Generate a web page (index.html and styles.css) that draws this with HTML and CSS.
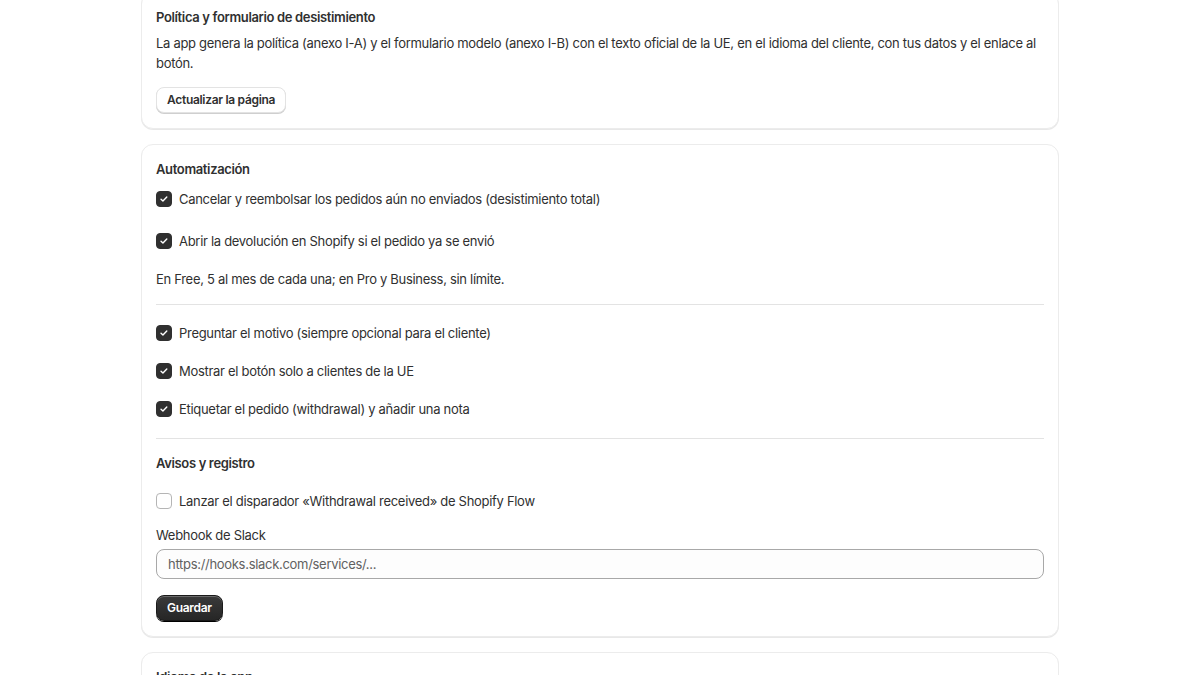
FILE: index.html
```html
<!DOCTYPE html>
<html lang="es">
<head>
<meta charset="utf-8">
<title>Ajustes</title>
<link rel="stylesheet" href="styles.css">
</head>
<body>
<main class="page">
  <section class="card">
    <h2 class="heading">Política y formulario de desistimiento</h2>
    <p class="text mt-6">La app genera la política (anexo I-A) y el formulario modelo (anexo I-B) con el texto oficial de la UE, en el idioma del cliente, con tus datos y el enlace al botón.</p>
    <div class="mt-14"><button class="btn">Actualizar la página</button></div>
  </section>

  <section class="card">
    <h2 class="heading">Automatización</h2>
    <label class="check mt-10"><span class="box on"><svg viewBox="0 0 16 16"><path d="M4.6 8.2l2.2 2.2 4.4-4.6" /></svg></span><span>Cancelar y reembolsar los pedidos aún no enviados (desistimiento total)</span></label>
    <label class="check mt-22"><span class="box on"><svg viewBox="0 0 16 16"><path d="M4.6 8.2l2.2 2.2 4.4-4.6" /></svg></span><span>Abrir la devolución en Shopify si el pedido ya se envió</span></label>
    <p class="text mt-18">En Free, 5 al mes de cada una; en Pro y Business, sin límite.</p>
    <hr class="divider">
    <label class="check"><span class="box on"><svg viewBox="0 0 16 16"><path d="M4.6 8.2l2.2 2.2 4.4-4.6" /></svg></span><span>Preguntar el motivo (siempre opcional para el cliente)</span></label>
    <label class="check mt-18"><span class="box on"><svg viewBox="0 0 16 16"><path d="M4.6 8.2l2.2 2.2 4.4-4.6" /></svg></span><span>Mostrar el botón solo a clientes de la UE</span></label>
    <label class="check mt-18"><span class="box on"><svg viewBox="0 0 16 16"><path d="M4.6 8.2l2.2 2.2 4.4-4.6" /></svg></span><span>Etiquetar el pedido (withdrawal) y añadir una nota</span></label>
    <hr class="divider divider-b">
    <h2 class="heading">Avisos y registro</h2>
    <label class="check mt-18"><span class="box"></span><span>Lanzar el disparador «Withdrawal received» de Shopify Flow</span></label>
    <label class="field-label mt-14" for="slack">Webhook de Slack</label>
    <input id="slack" class="input" type="text" placeholder="https://hooks.slack.com/services/...">
    <div class="mt-16"><button class="btn btn-primary">Guardar</button></div>
  </section>

  <section class="card">
    <h2 class="heading">Idioma de la app</h2>
    <p class="text mt-6">&nbsp;</p>
  </section>
</main>
</body>
</html>
```
FILE: styles.css
```css
* { box-sizing: border-box; }
html, body { margin: 0; padding: 0; background: #ffffff; }
body {
  font-family: Inter, "Noto Sans", "Liberation Sans", sans-serif;
  font-size: 13px;
  line-height: 20px;
  letter-spacing: -0.3px;
  color: #303030;
  overflow: hidden;
}
.page {
  width: 918px;
  margin: -8px auto 0;
  display: flex;
  flex-direction: column;
  gap: 15px;
}
.card {
  background: #fff;
  border: 1px solid #ececec;
  border-radius: 12px;
  box-shadow: 0 1px 0 0 rgba(0, 0, 0, 0.09);
  padding: 14px 14px 15px 14px;
  display: flex;
  flex-direction: column;
  align-items: stretch;
}
.heading {
  margin: 0;
  font-size: 13px;
  line-height: 20px;
  font-weight: 600;
  letter-spacing: -0.35px;
  color: #303030;
}
.text { margin: 0; }
.mt-6 { margin-top: 6px; }
.mt-10 { margin-top: 10px; }
.mt-14 { margin-top: 14px; }
.mt-16 { margin-top: 16px; }
.mt-18 { margin-top: 18px; }
.mt-22 { margin-top: 22px; }

.btn {
  font-family: inherit;
  font-size: 12px;
  font-weight: 600;
  line-height: 16px;
  letter-spacing: -0.3px;
  color: #303030;
  background: #fff;
  border: 1px solid #e3e3e3;
  border-radius: 8px;
  padding: 4px 10px;
  height: 26px;
  box-shadow: 0 1px 0 0 #cfcfcf;
  cursor: pointer;
}
.btn-primary {
  color: #fff;
  background: linear-gradient(#3a3a3a, #262626);
  border-color: #1a1a1a;
  box-shadow: inset 0 1px 0 rgba(255,255,255,0.25), 0 1px 0 0 #000;
}

.check {
  display: flex;
  align-items: center;
  gap: 7px;
  height: 20px;
  cursor: pointer;
}
.box {
  width: 16px;
  height: 16px;
  border-radius: 4px;
  border: 1px solid #b5b5b5;
  background: #fff;
  display: flex;
  align-items: center;
  justify-content: center;
  flex: none;
}
.box.on {
  background: #303030;
  border-color: #303030;
}
.box svg { width: 16px; height: 16px; }
.box svg path {
  fill: none;
  stroke: #fff;
  stroke-width: 1.6;
  stroke-linecap: round;
  stroke-linejoin: round;
}

.divider {
  border: 0;
  border-top: 1px solid #e3e3e3;
  margin: 15px 0 18px;
  height: 0;
}
.divider-b { margin: 19px 0 14px; }

.field-label { display: block; }
.input {
  margin-top: 4px;
  height: 30px;
  width: 100%;
  border: 1px solid #a8a8a8;
  border-radius: 8px;
  background: #fdfdfd;
  padding: 0 11px;
  font-family: inherit;
  font-size: 13px;
  letter-spacing: -0.3px;
  color: #303030;
}
.input::placeholder { color: #616161; }
```
